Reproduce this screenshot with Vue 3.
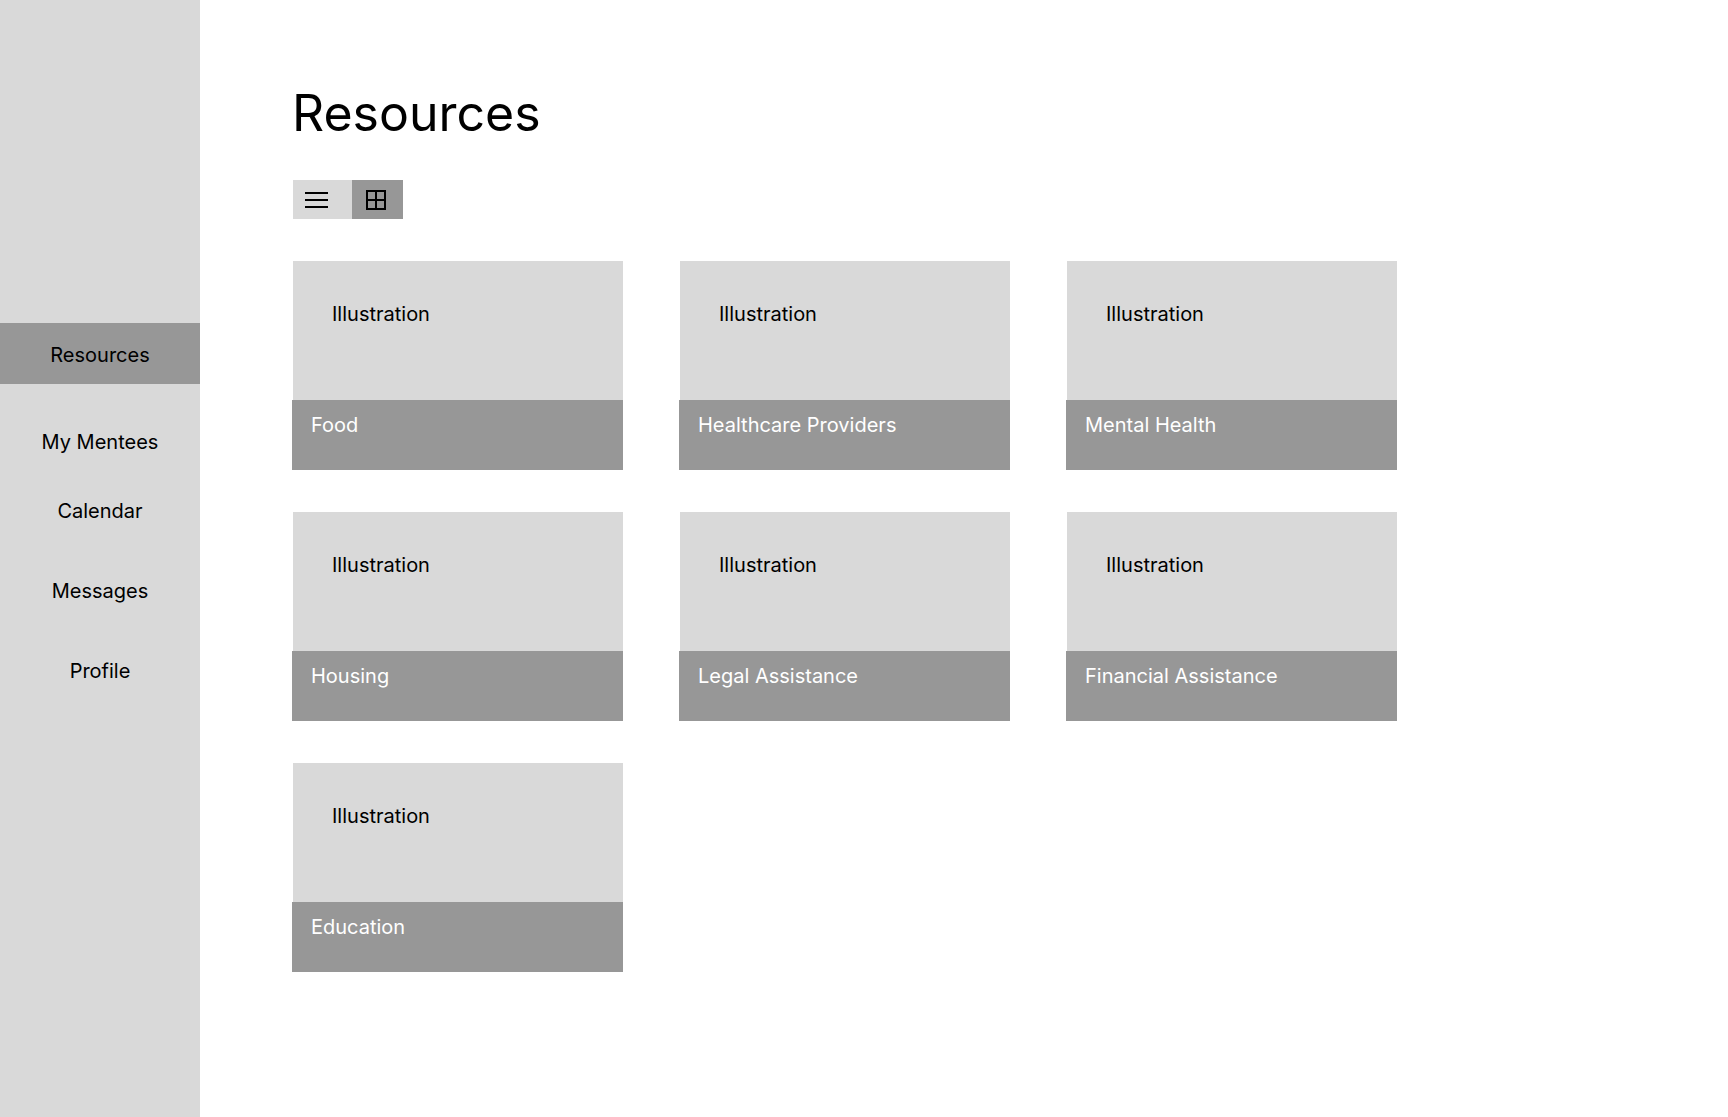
<script setup>
import { ref } from 'vue'

const navItems = [
  { label: 'Resources', state: 'active' },
  { label: 'My Mentees', state: 'compact' },
  { label: 'Calendar' },
  { label: 'Messages' },
  { label: 'Profile' },
]

const resources = [
  'Food',
  'Healthcare Providers',
  'Mental Health',
  'Housing',
  'Legal Assistance',
  'Financial Assistance',
  'Education',
]

const view = ref('grid')
</script>

<template>
  <div class="layout">
    <nav class="sidebar" aria-label="Main">
      <ul class="nav-list">
        <li v-for="item in navItems" :key="item.label" class="nav-item" :class="item.state">
          <a class="nav-link" href="#" :aria-current="item.state === 'active' ? 'page' : null">{{ item.label }}</a>
        </li>
      </ul>
    </nav>

    <main class="content">
      <h1 class="title">Resources</h1>

      <div class="toggle" role="group" aria-label="View">
        <button
          type="button"
          class="toggle-button list"
          :class="{ selected: view === 'list' }"
          :aria-pressed="view === 'list'"
          aria-label="List view"
          @click="view = 'list'"
        >
          <svg width="23" height="16" viewBox="0 0 23 16" fill="none" stroke="#000" stroke-width="2" aria-hidden="true">
            <path d="M0 1h23M0 8h23M0 15h23" />
          </svg>
        </button>
        <button
          type="button"
          class="toggle-button grid"
          :class="{ selected: view === 'grid' }"
          :aria-pressed="view === 'grid'"
          aria-label="Grid view"
          @click="view = 'grid'"
        >
          <svg width="20" height="20" viewBox="0 0 20 20" fill="none" stroke="#000" stroke-width="2" aria-hidden="true">
            <path d="M1 1h18v18H1zM10 1v18M1 10h18" />
          </svg>
        </button>
      </div>

      <section class="cards" :class="{ stacked: view === 'list' }" aria-label="Resource categories">
        <a v-for="name in resources" :key="name" class="card" href="#">
          <div class="illustration">Illustration</div>
          <div class="caption">{{ name }}</div>
        </a>
      </section>
    </main>
  </div>
</template>

<style>
body {
  margin: 0;
  background: #fff;
}
</style>

<style scoped>
.layout {
  display: flex;
  min-height: 100vh;
  color: #000;
  font-family: Inter, "Liberation Sans", sans-serif;
  font-size: 20px;
  line-height: 24px;
}

.sidebar {
  flex: 0 0 200px;
  box-sizing: border-box;
  padding-top: 323px;
  background: #d9d9d9;
}

.nav-list {
  margin: 0;
  padding: 0;
  list-style: none;
}

.nav-item {
  margin-bottom: 56px;
}

.nav-item.compact {
  margin-bottom: 45px;
}

.nav-item.active {
  margin-bottom: 46px;
  padding: 20px 0 17px;
  background: #979797;
}

.nav-link {
  display: block;
  color: inherit;
  text-align: center;
  text-decoration: none;
}

.content {
  flex: 1;
  min-width: 0;
  padding: 83px 92px 40px;
}

.title {
  margin: 0 0 37px;
  font-size: 50px;
  font-weight: 400;
  line-height: 60px;
}

.toggle {
  display: flex;
  margin: 0 0 42px 1px;
}

.toggle-button {
  display: flex;
  align-items: center;
  box-sizing: border-box;
  height: 39px;
  padding: 0;
  border: 0;
  background: #d9d9d9;
  cursor: pointer;
}

.toggle-button.list {
  width: 59px;
  padding-left: 12px;
}

.toggle-button.grid {
  width: 51px;
  padding-left: 14px;
}

.toggle-button.selected {
  background: #979797;
}

.cards {
  display: grid;
  grid-template-columns: repeat(3, minmax(0, 331px));
  gap: 42px 56px;
}

.cards.stacked {
  grid-template-columns: minmax(0, 331px);
}

.card {
  color: inherit;
  text-decoration: none;
}

.illustration {
  box-sizing: border-box;
  min-height: 139px;
  margin-left: 1px;
  padding: 41px 39px;
  background: #d9d9d9;
}

.caption {
  box-sizing: border-box;
  min-height: 70px;
  padding: 13px 19px;
  background: #979797;
  color: #fff;
}
</style>
